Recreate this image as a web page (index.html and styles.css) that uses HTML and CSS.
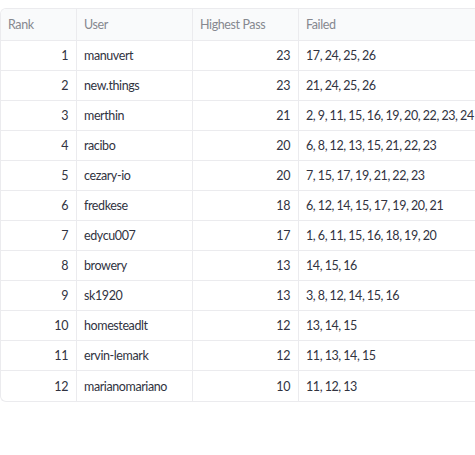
FILE: index.html
```html
<!DOCTYPE html>
<html>
<head>
<meta charset="utf-8">
<link rel="stylesheet" href="styles.css">
</head>
<body>
<div class="grid">
  <div class="cell head">Rank</div><div class="cell head">User</div><div class="cell head">Highest Pass</div><div class="cell head last">Failed</div>
  <div class="cell num">1</div><div class="cell">manuvert</div><div class="cell num">23</div><div class="cell last">17, 24, 25, 26</div>
  <div class="cell num">2</div><div class="cell">new.things</div><div class="cell num">23</div><div class="cell last">21, 24, 25, 26</div>
  <div class="cell num">3</div><div class="cell">merthin</div><div class="cell num">21</div><div class="cell last">2, 9, 11, 15, 16, 19, 20, 22, 23, 24</div>
  <div class="cell num">4</div><div class="cell">racibo</div><div class="cell num">20</div><div class="cell last">6, 8, 12, 13, 15, 21, 22, 23</div>
  <div class="cell num">5</div><div class="cell">cezary-io</div><div class="cell num">20</div><div class="cell last">7, 15, 17, 19, 21, 22, 23</div>
  <div class="cell num">6</div><div class="cell">fredkese</div><div class="cell num">18</div><div class="cell last">6, 12, 14, 15, 17, 19, 20, 21</div>
  <div class="cell num">7</div><div class="cell">edycu007</div><div class="cell num">17</div><div class="cell last">1, 6, 11, 15, 16, 18, 19, 20</div>
  <div class="cell num">8</div><div class="cell">browery</div><div class="cell num">13</div><div class="cell last">14, 15, 16</div>
  <div class="cell num">9</div><div class="cell">sk1920</div><div class="cell num">13</div><div class="cell last">3, 8, 12, 14, 15, 16</div>
  <div class="cell num">10</div><div class="cell">homesteadlt</div><div class="cell num">12</div><div class="cell last">13, 14, 15</div>
  <div class="cell num">11</div><div class="cell">ervin-lemark</div><div class="cell num">12</div><div class="cell last">11, 13, 14, 15</div>
  <div class="cell num bottom">12</div><div class="cell bottom">marianomariano</div><div class="cell num bottom">10</div><div class="cell last bottom">11, 12, 13</div>
</div>
</body>
</html>
```
FILE: styles.css
```css
html, body {
  margin: 0;
  padding: 0;
  overflow: hidden;
  background: #ffffff;
}
body {
  padding-top: 8px;
  font-family: "Lato", "Liberation Sans", sans-serif;
  font-size: 12.5px;
  letter-spacing: -0.4px;
  color: #31333f;
}
.grid {
  display: grid;
  grid-template-columns: 76px 116px 106px 1fr;
  grid-template-rows: 32px;
  grid-auto-rows: 30px;
  width: 475px;
  box-sizing: border-box;
  border: 1px solid #ebebee;
  border-right: none;
  border-radius: 6px 0 0 6px;
  overflow: hidden;
}
.cell {
  display: flex;
  align-items: center;
  padding: 0 8px 0 7px;
  border-right: 1px solid #ebebee;
  border-bottom: 1px solid #ebebee;
  white-space: nowrap;
  overflow: hidden;
}
.cell.last {
  border-right: none;
  word-spacing: -0.3px;
}
.cell.head.last {
  word-spacing: normal;
}
.cell.bottom {
  border-bottom: none;
}
.head {
  background: #f9fafb;
  color: #86888f;
}
.num {
  justify-content: flex-end;
}
```
